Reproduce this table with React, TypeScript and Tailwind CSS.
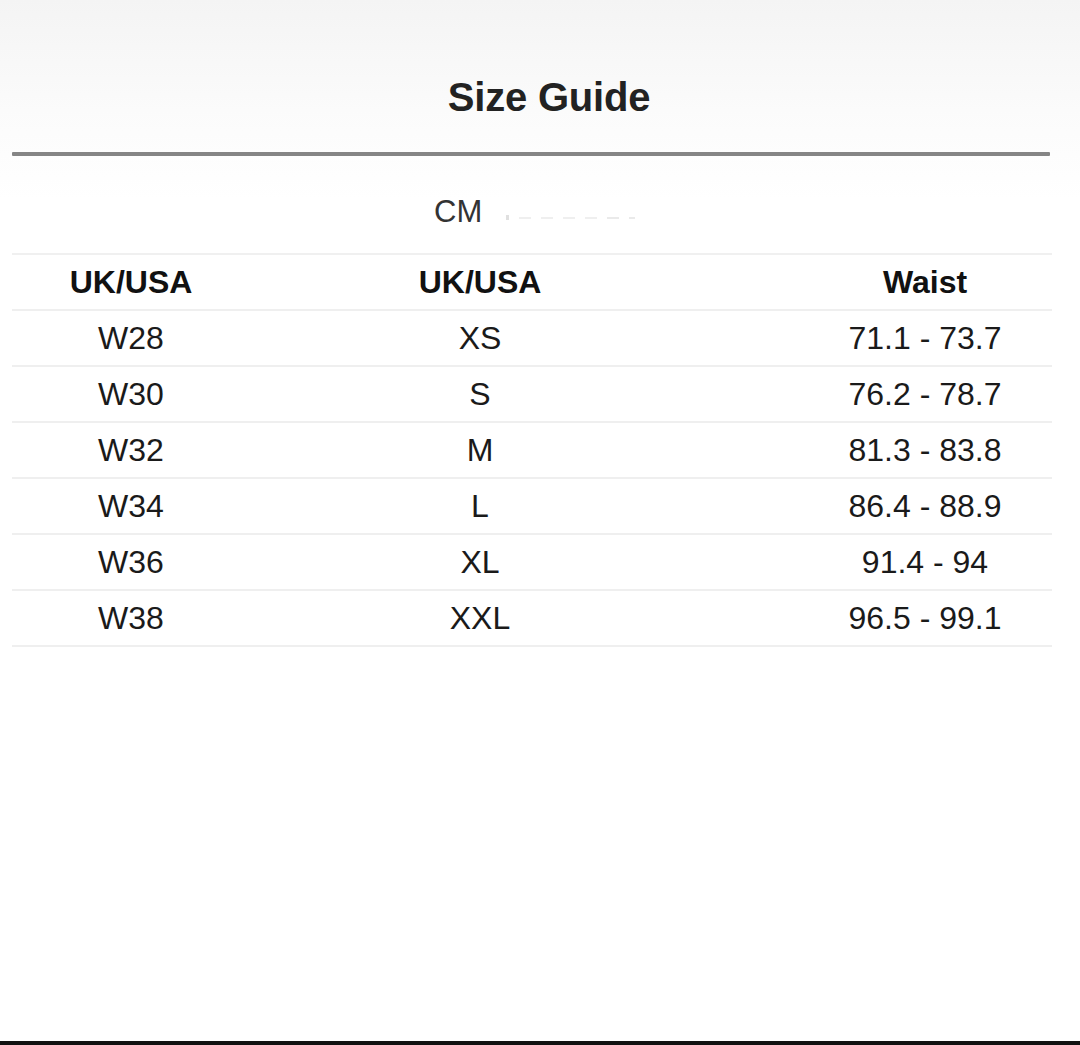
import React from "react";

const rows: [string, string, string][] = [
  ["W28", "XS", "71.1 - 73.7"],
  ["W30", "S", "76.2 - 78.7"],
  ["W32", "M", "81.3 - 83.8"],
  ["W34", "L", "86.4 - 88.9"],
  ["W36", "XL", "91.4 - 94"],
  ["W38", "XXL", "96.5 - 99.1"],
];

export default function App() {
  return (
    <div
      className="relative w-[1080px] h-[1045px] overflow-hidden bg-[linear-gradient(180deg,#f4f4f4_0px,#fbfbfb_110px,#ffffff_200px)] text-[#1c1c1c]"
      style={{ fontFamily: '"Liberation Sans", Arial, sans-serif' }}
    >
      <div className="h-[78px]" />
      <h1 className="pl-[18px] text-center text-[40px] leading-[38px] font-bold text-[#222] tracking-[-0.2px]">
        Size Guide
      </h1>
      <div className="h-[36px]" />
      <div className="ml-[12px] w-[1038px] h-[4px] bg-[#858585] rounded-[1px]" />
      <div className="h-[97px] flex items-center pl-[434px] pt-[14px] gap-[24px]">
        <span className="text-[31px] text-[#333] leading-none">CM</span>
        <span className="flex items-center gap-[10px] mt-[12px] opacity-30">
          <span className="w-[3px] h-[5px] bg-[#999]" />
          <span className="w-[12px] h-[2px] bg-[#ccc]" />
          <span className="w-[12px] h-[2px] bg-[#ccc]" />
          <span className="w-[12px] h-[2px] bg-[#ccc]" />
          <span className="w-[12px] h-[2px] bg-[#ccc]" />
          <span className="w-[12px] h-[2px] bg-[#bbb]" />
          <span className="w-[6px] h-[2px] bg-[#bbb]" />
        </span>
      </div>
      <div className="ml-[12px] w-[1040px] border-t-[2px] border-[#f0f0f0]">
        <div className="grid grid-cols-[238px_460px_1fr] h-[56px] items-center border-b-[2px] border-[#efefef] text-[32px] font-bold text-[#111]">
          <div className="text-center">UK/USA</div>
          <div className="text-center">UK/USA</div>
          <div className="text-center pl-[88px]">Waist</div>
        </div>
        {rows.map(([a, b, c]) => (
          <div
            key={a}
            className="grid grid-cols-[238px_460px_1fr] h-[56px] items-center border-b-[2px] border-[#efefef] text-[32px] text-[#1a1a1a]"
          >
            <div className="text-center">{a}</div>
            <div className="text-center">{b}</div>
            <div className="text-center pl-[88px]">{c}</div>
          </div>
        ))}
      </div>
      <div className="absolute left-0 right-0 bottom-0 h-[4px] bg-[#111]" />
    </div>
  );
}
